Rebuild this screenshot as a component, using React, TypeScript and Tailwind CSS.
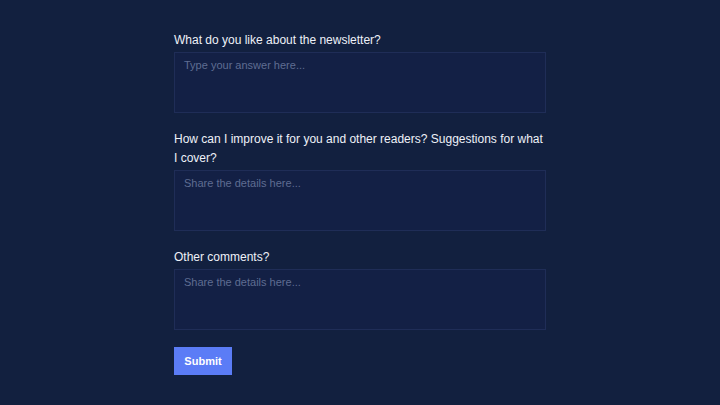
const questions = [
  { label: 'What do you like about the newsletter?', placeholder: 'Type your answer here...' },
  {
    label: 'How can I improve it for you and other readers? Suggestions for what I cover?',
    placeholder: 'Share the details here...',
  },
  { label: 'Other comments?', placeholder: 'Share the details here...' },
];

export default function App() {
  return (
    <div className="min-h-[405px] w-full bg-[#12203f] font-['Liberation_Sans',Arial,sans-serif]">
      <form className="mx-auto flex w-[372px] flex-col pt-[30px]" onSubmit={(e) => e.preventDefault()}>
        {questions.map((q, i) => (
          <div key={i} className="mb-4 flex flex-col">
            <label className="mb-[2px] pt-[1px] text-[12px] leading-[19px] text-[#eef1f8]">{q.label}</label>
            <textarea
              className="h-[61px] resize-none border border-[#1f2d57] bg-[#132045] px-[9px] pt-[4px] text-[11px] leading-[16px] text-white outline-none placeholder:text-[#5f6d92]"
              placeholder={q.placeholder}
            />
          </div>
        ))}
        <div className="mt-[1px]">
          <button
            type="submit"
            className="h-[28px] w-[58px] bg-[#5b7cf6] text-[11px] font-bold text-white"
          >
            Submit
          </button>
        </div>
      </form>
    </div>
  );
}
